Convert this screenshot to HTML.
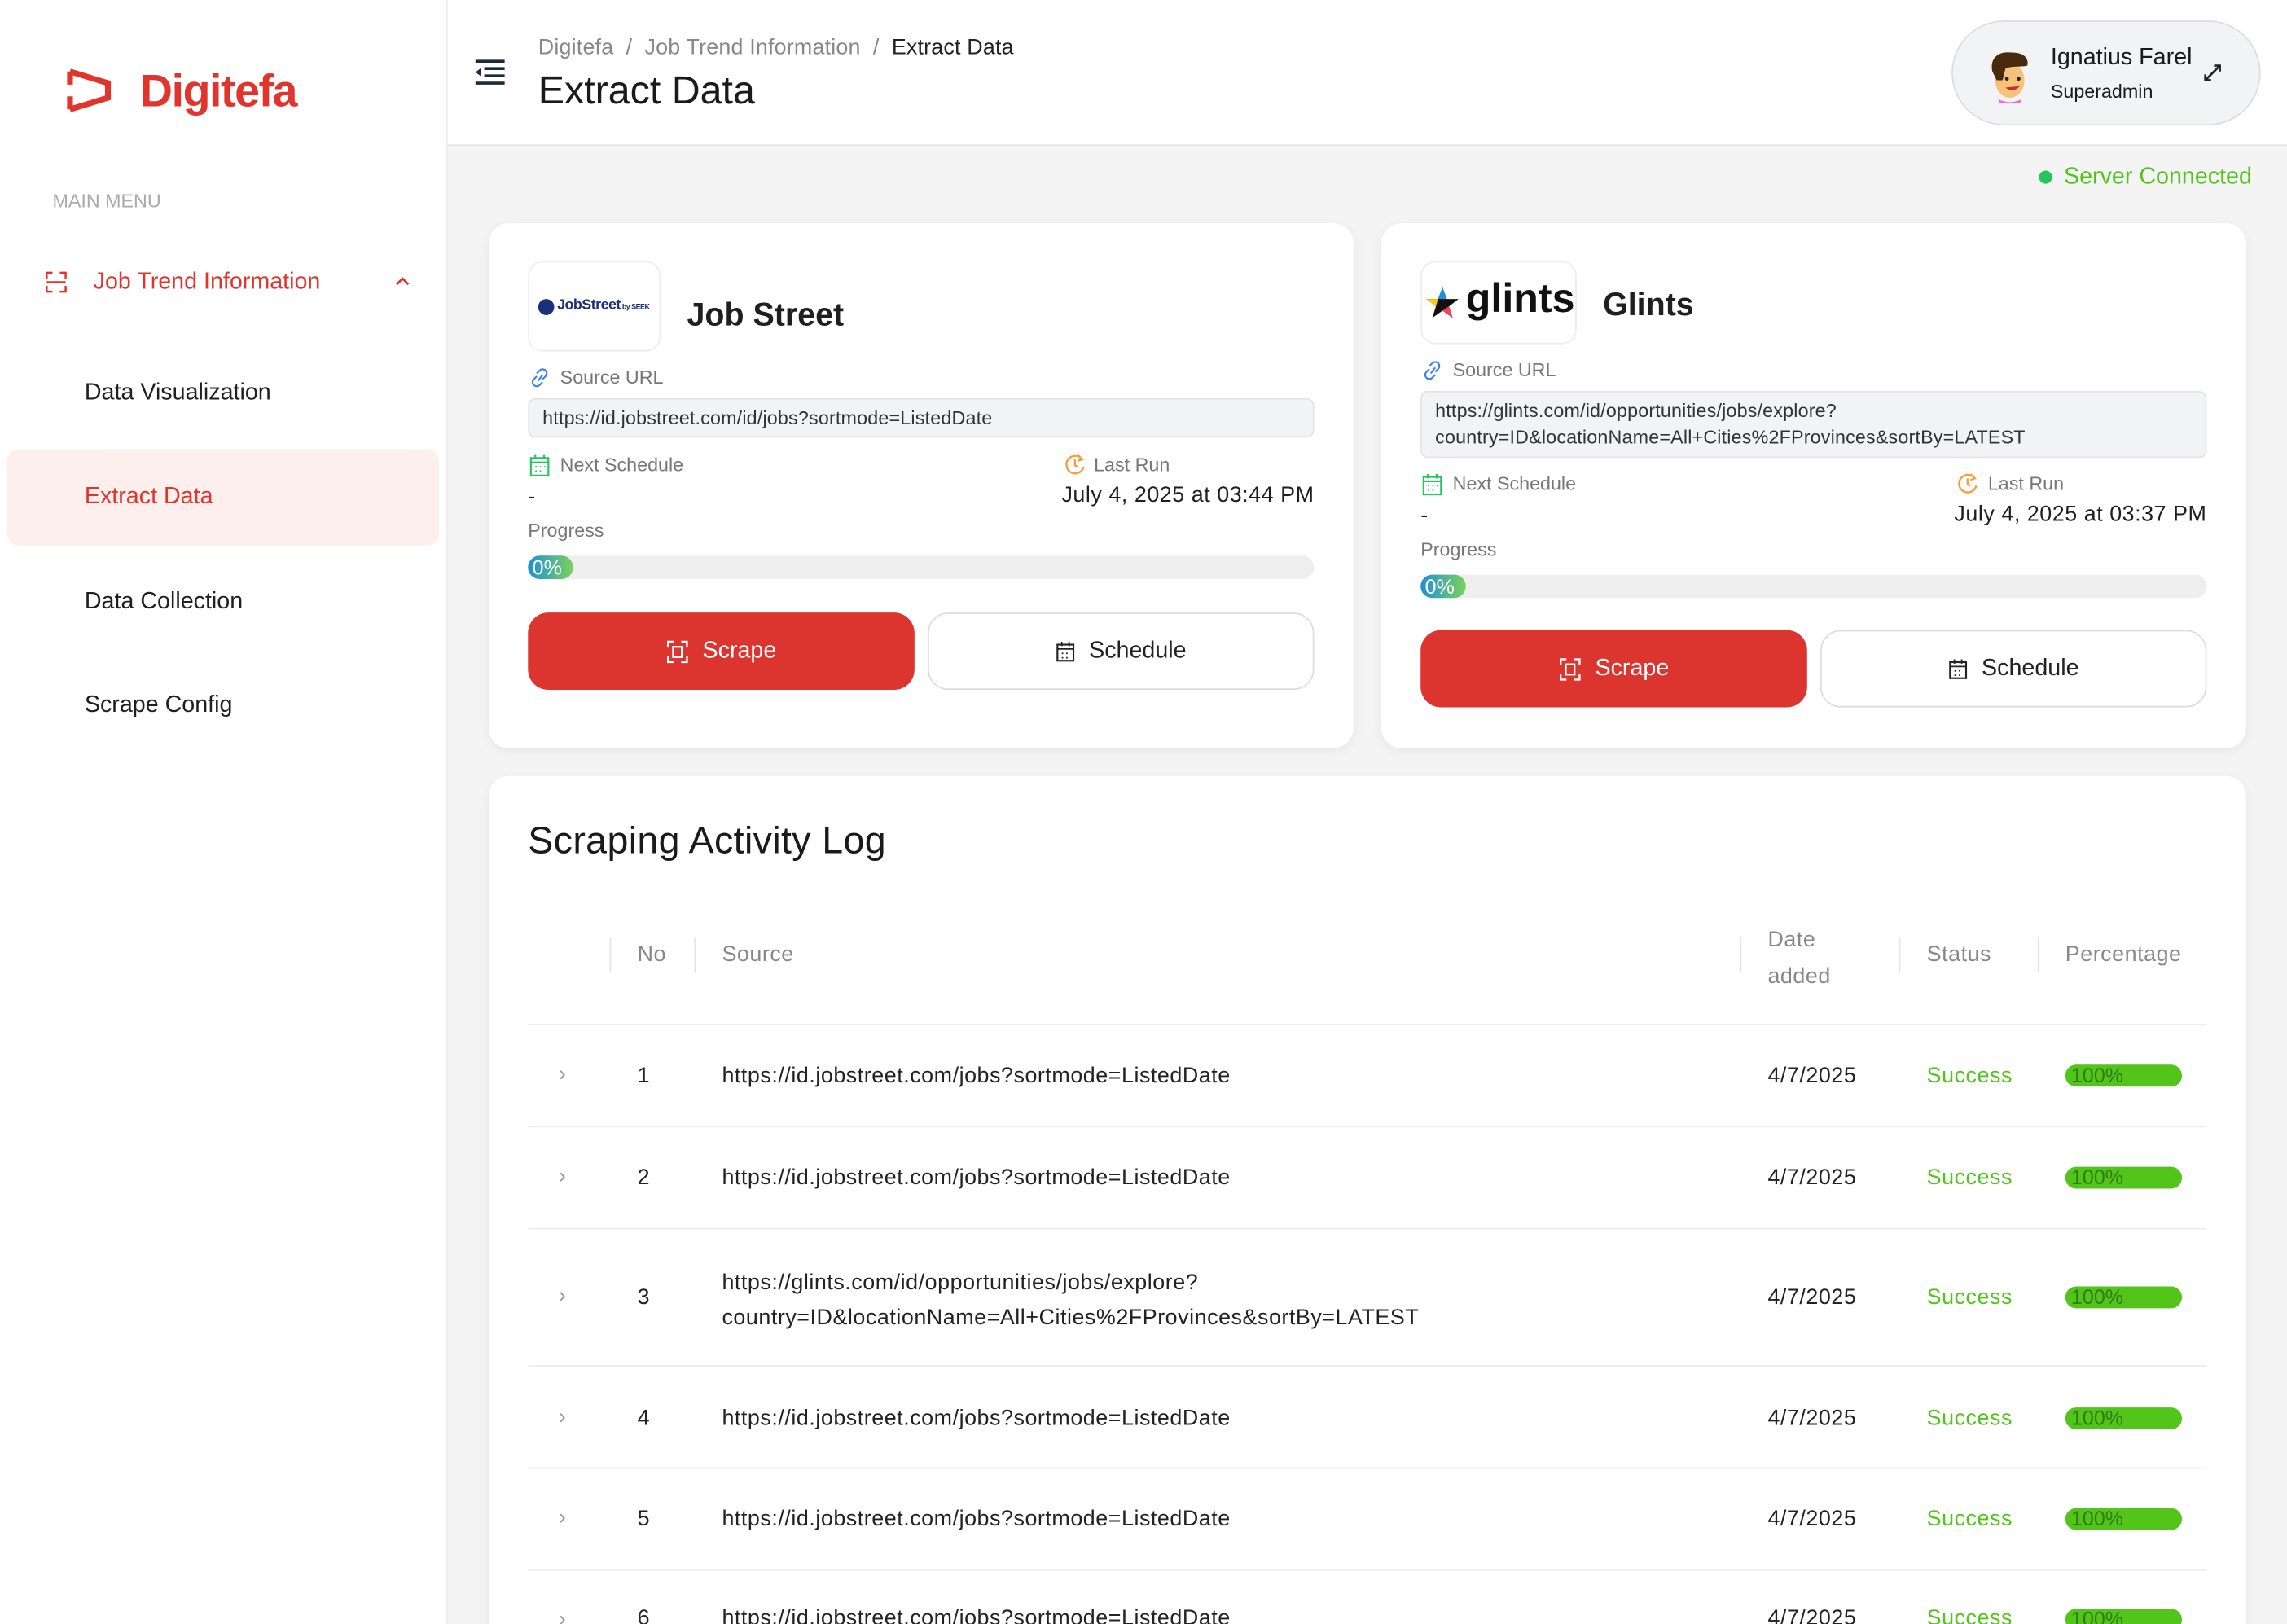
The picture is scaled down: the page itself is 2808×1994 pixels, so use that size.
<!DOCTYPE html>
<html><head><meta charset="utf-8">
<style>
*{box-sizing:border-box;margin:0;padding:0}
html,body{width:2808px;height:1994px;overflow:hidden;background:#f4f4f5}
body{font-family:"Liberation Sans",Arial,sans-serif;color:#1f1f1f}
#root{width:1568px;height:1114px;transform:scale(1.7908);transform-origin:0 0;position:relative;background:#f4f4f5}
.abs{position:absolute}
.side{left:0;top:0;width:307px;height:1114px;background:#fff;border-right:1px solid #ececec}
.t{position:absolute;white-space:nowrap}
.hdr{left:307px;top:0;width:1261px;height:100px;background:#fff;border-bottom:1px solid #e6e6e6}
.card{position:absolute;background:#fff;border-radius:14px;box-shadow:0 2px 8px rgba(0,0,0,.06)}
.gray{color:#777}
.inp{position:absolute;background:#f2f3f5;border:1px solid #e4e4e4;border-radius:5px;font-size:13px;color:#333;padding:0 9px;letter-spacing:0.1px}
.bar{position:absolute;height:16px;border-radius:8px;background:#efefef}
.pct{position:absolute;left:0;top:0;height:16px;width:31px;border-radius:8px;background:linear-gradient(90deg,#1e90d6,#7bd35a);color:#fff;font-size:14px;line-height:16px;padding-left:3px}
.btnr{position:absolute;height:53px;border-radius:14px;background:#dc3530;color:#fff;font-size:16px;display:flex;align-items:center;justify-content:center;gap:10px}
.btnw{position:absolute;height:53px;border-radius:14px;background:#fff;border:1px solid #ddd;color:#222;font-size:16px;display:flex;align-items:center;justify-content:center;gap:10px}
.row{position:absolute;left:362px;width:1151px;border-top:1px solid #ececec}
.c{position:absolute;font-size:15px;color:#222;white-space:nowrap;letter-spacing:0.3px}
.g100{position:absolute;left:1416px;width:80px;height:15px;border-radius:8px;background:#52c41a;color:#2f7d10;font-size:14px;line-height:15px;padding-left:4px}
.sep{position:absolute;top:643px;width:1px;height:24px;background:#e5e5e5}
</style></head><body><div id="root">

<div class="abs side">
  <svg class="abs" style="left:45px;top:46px" width="32" height="32" viewBox="0 0 32 32"><path d="M3 3 L29 11 V21 L3 29 M3 3 V12 M3 20 V29" fill="none" stroke="#e0342c" stroke-width="4"/></svg>
  <div class="t" style="left:96px;top:45px;font-size:31px;font-weight:bold;color:#e0342c;letter-spacing:-0.8px">Digitefa</div>
  <div class="t" style="left:36px;top:130px;font-size:13px;color:#aaa">MAIN MENU</div>
  <svg class="abs" style="left:31px;top:186px" width="15" height="15" viewBox="0 0 15 15"><path d="M1 5V1H5M10 1H14V5M14 10V14H10M5 14H1V10M1 7.5H14" fill="none" stroke="#e0342c" stroke-width="1.4"/></svg>
  <div class="t" style="left:64px;top:185px;font-size:16px;color:#e0342c">Job Trend Information</div>
  <svg class="abs" style="left:270px;top:189px" width="12" height="8" viewBox="0 0 12 8"><path d="M2 6L6 2L10 6" fill="none" stroke="#e0342c" stroke-width="1.5"/></svg>
  <div class="t" style="left:58px;top:261px;font-size:16px">Data Visualization</div>
  <div class="abs" style="left:5px;top:308px;width:296px;height:66px;background:#fdf0ec;border-radius:8px"></div>
  <div class="t" style="left:58px;top:332px;font-size:16px;color:#e0342c">Extract Data</div>
  <div class="t" style="left:58px;top:404px;font-size:16px">Data Collection</div>
  <div class="t" style="left:58px;top:475px;font-size:16px">Scrape Config</div>
</div>

<div class="abs hdr">
  <svg class="abs" style="left:18px;top:40px" width="22" height="19" viewBox="0 0 22 19"><path d="M1 2H21M7 7H21M7 12H21M1 17H21" stroke="#1f2937" stroke-width="2"/><path d="M1 9.5L5 6.5V12.5Z" fill="#1f2937"/></svg>
  <div class="t" style="left:62px;top:24px;font-size:15px;color:#888;letter-spacing:0.1px">Digitefa &nbsp;/&nbsp; Job Trend Information &nbsp;/&nbsp; <span style="color:#222">Extract Data</span></div>
  <div class="t" style="left:62px;top:47px;font-size:27px;color:#1a1a1a">Extract Data</div>
  <div class="abs" style="left:1031px;top:14px;width:212px;height:72px;border-radius:36px;background:#f2f3f5;border:1px solid #ddd">
    <svg class="abs" style="left:22px;top:18px" width="34" height="38" viewBox="0 0 34 38"><ellipse cx="17" cy="22" rx="10" ry="12" fill="#f6c27a"/><path d="M5 16C3 6 10 2 18 3C28 3 30 8 29 12C25 13 18 12 14 14L12 22H8Z" fill="#4a2a0c"/><circle cx="15" cy="21" r="1.3" fill="#222"/><circle cx="23" cy="21" r="1.3" fill="#222"/><path d="M14 27Q19 31 24 26Z" fill="#b33"/><path d="M9 35Q17 39 25 35L24 38H10Z" fill="#f46bd0"/></svg>
    <div class="t" style="left:67px;top:16px;font-size:16px;color:#1a1a1a">Ignatius Farel</div>
    <div class="t" style="left:67px;top:40px;font-size:13px;color:#1a1a1a">Superadmin</div>
    <svg class="abs" style="left:171px;top:28px" width="14" height="14" viewBox="0 0 14 14"><path d="M2 12L12 2M8 2H12V6M2 8V12H6" fill="none" stroke="#222" stroke-width="1.5"/></svg>
  </div>
</div>

<div class="abs" style="left:1398px;top:117px;width:9px;height:9px;border-radius:50%;background:#22c55e"></div>
<div class="t" style="left:1415px;top:113px;font-size:16px;color:#52c41a">Server Connected</div>

<!-- card 1 -->
<div class="card" style="left:335px;top:153px;width:593px;height:360px"></div>
<div class="abs" style="left:362px;top:179px;width:91px;height:62px;border:1px solid #eee;border-radius:10px;background:#fff"></div>
<div class="abs" style="left:369px;top:205px;width:11px;height:11px;border-radius:50%;background:#1c2f7a"></div>
<div class="t" style="left:382px;top:204px;font-size:10px;font-weight:bold;color:#1c2f7a;letter-spacing:-0.3px">JobStreet<span style="font-size:5px"> by SEEK</span></div>
<div class="t" style="left:471px;top:203px;font-size:22px;font-weight:bold">Job Street</div>
<svg class="abs" style="left:362px;top:252px" width="16" height="14" viewBox="0 0 16 14"><path d="M7 9L10 5M6 6L4 8A2.5 2.5 0 0 0 8 12L10 10M10 8L12 6A2.5 2.5 0 0 0 8 2L6 4" fill="none" stroke="#3b82f6" stroke-width="1.2"/></svg>
<div class="t gray" style="left:384px;top:251px;font-size:13px">Source URL</div>
<div class="inp" style="left:362px;top:273px;width:539px;height:27px;line-height:26px">https://id.jobstreet.com/id/jobs?sortmode=ListedDate</div>
<svg class="abs" style="left:363px;top:311px" width="14" height="16" viewBox="0 0 14 16"><rect x="1" y="3" width="12" height="12" fill="none" stroke="#22c55e" stroke-width="1.2"/><path d="M1 6H13M4 1V4M10 1V4" stroke="#22c55e" stroke-width="1.2"/><path d="M4 9h1M7 9h1M10 9h1M4 12h1M7 12h1" stroke="#22c55e"/></svg>
<div class="t gray" style="left:384px;top:311px;font-size:13px">Next Schedule</div>
<div class="t" style="left:362px;top:332px;font-size:15px">-</div>
<svg class="abs" style="left:730px;top:311px" width="15" height="15" viewBox="0 0 15 15"><path d="M12 4A6 6 0 1 0 13 9M9 1L12 4L9 5M7 4V8L9 9" fill="none" stroke="#f59e3a" stroke-width="1.3"/></svg>
<div class="t gray" style="left:750px;top:311px;font-size:13px">Last Run</div>
<div class="t" style="right:667px;top:331px;font-size:15px;letter-spacing:0.3px">July 4, 2025 at 03:44 PM</div>
<div class="t gray" style="left:362px;top:356px;font-size:13px">Progress</div>
<div class="bar" style="left:362px;top:381px;width:539px"><div class="pct">0%</div></div>
<div class="btnr" style="left:362px;top:420px;width:265px"><svg width="15" height="16" viewBox="0 0 15 16"><path d="M1 5V1H5M10 1H14V5M14 11V15H10M5 15H1V11" fill="none" stroke="#fff" stroke-width="1.3"/><rect x="4.5" y="4.5" width="6" height="7" fill="none" stroke="#fff" stroke-width="1.3"/></svg>Scrape</div>
<div class="btnw" style="left:636px;top:420px;width:265px"><svg width="13" height="14" viewBox="0 0 13 14"><rect x="1" y="2" width="11" height="11" fill="none" stroke="#222" stroke-width="1.2"/><path d="M1 5H12M4 0V3M9 0V3M4 8h1M7 8h1M4 11h1M7 11h1" stroke="#222" stroke-width="1"/></svg>Schedule</div>

<!-- card 2 -->
<div class="card" style="left:947px;top:153px;width:593px;height:360px"></div>
<div class="abs" style="left:974px;top:179px;width:107px;height:57px;border:1px solid #eee;border-radius:10px;background:#fff"></div>
<svg class="abs" style="left:977px;top:196px" width="24" height="24" viewBox="0 0 24 24"><path d="M12 1L15 9L23 9L16.5 14L19 22L12 17L5 22L7.5 14L1 9L9 9Z" fill="#111"/><path d="M12 1L15 9L9 9Z" fill="#1e90d6"/><path d="M16.5 14L19 22L12 17Z" fill="#f43f5e"/><path d="M1 9L9 9L7.5 14Z" fill="#facc15"/></svg>
<div class="t" style="left:1005px;top:189px;font-size:28px;font-weight:bold;color:#111">glints</div>
<div class="t" style="left:1099px;top:196px;font-size:22px;font-weight:bold">Glints</div>
<svg class="abs" style="left:974px;top:247px" width="16" height="14" viewBox="0 0 16 14"><path d="M7 9L10 5M6 6L4 8A2.5 2.5 0 0 0 8 12L10 10M10 8L12 6A2.5 2.5 0 0 0 8 2L6 4" fill="none" stroke="#3b82f6" stroke-width="1.2"/></svg>
<div class="t gray" style="left:996px;top:246px;font-size:13px">Source URL</div>
<div class="inp" style="left:974px;top:268px;width:539px;height:46px;line-height:18px;padding-top:4px">https://glints.com/id/opportunities/jobs/explore?<br>country=ID&amp;locationName=All+Cities%2FProvinces&amp;sortBy=LATEST</div>
<svg class="abs" style="left:975px;top:324px" width="14" height="16" viewBox="0 0 14 16"><rect x="1" y="3" width="12" height="12" fill="none" stroke="#22c55e" stroke-width="1.2"/><path d="M1 6H13M4 1V4M10 1V4" stroke="#22c55e" stroke-width="1.2"/><path d="M4 9h1M7 9h1M10 9h1M4 12h1M7 12h1" stroke="#22c55e"/></svg>
<div class="t gray" style="left:996px;top:324px;font-size:13px">Next Schedule</div>
<div class="t" style="left:974px;top:345px;font-size:15px">-</div>
<svg class="abs" style="left:1342px;top:324px" width="15" height="15" viewBox="0 0 15 15"><path d="M12 4A6 6 0 1 0 13 9M9 1L12 4L9 5M7 4V8L9 9" fill="none" stroke="#f59e3a" stroke-width="1.3"/></svg>
<div class="t gray" style="left:1363px;top:324px;font-size:13px">Last Run</div>
<div class="t" style="right:55px;top:344px;font-size:15px;letter-spacing:0.3px">July 4, 2025 at 03:37 PM</div>
<div class="t gray" style="left:974px;top:369px;font-size:13px">Progress</div>
<div class="bar" style="left:974px;top:394px;width:539px"><div class="pct">0%</div></div>
<div class="btnr" style="left:974px;top:432px;width:265px"><svg width="15" height="16" viewBox="0 0 15 16"><path d="M1 5V1H5M10 1H14V5M14 11V15H10M5 15H1V11" fill="none" stroke="#fff" stroke-width="1.3"/><rect x="4.5" y="4.5" width="6" height="7" fill="none" stroke="#fff" stroke-width="1.3"/></svg>Scrape</div>
<div class="btnw" style="left:1248px;top:432px;width:265px"><svg width="13" height="14" viewBox="0 0 13 14"><rect x="1" y="2" width="11" height="11" fill="none" stroke="#222" stroke-width="1.2"/><path d="M1 5H12M4 0V3M9 0V3M4 8h1M7 8h1M4 11h1M7 11h1" stroke="#222" stroke-width="1"/></svg>Schedule</div>

<!-- log -->
<div class="card" style="left:335px;top:532px;width:1205px;height:620px"></div>
<div class="t" style="left:362px;top:561px;font-size:26px;color:#1a1a1a;letter-spacing:0.2px">Scraping Activity Log</div>
<div class="sep" style="left:418px"></div><div class="sep" style="left:476px"></div><div class="sep" style="left:1193px"></div><div class="sep" style="left:1302px"></div><div class="sep" style="left:1397px"></div>
<div class="c gray" style="left:437px;top:646px;color:#888">No</div>
<div class="c" style="left:495px;top:646px;color:#888">Source</div>
<div class="c" style="left:1212px;top:632px;color:#888;line-height:25px">Date<br>added</div>
<div class="c" style="left:1321px;top:646px;color:#888">Status</div>
<div class="c" style="left:1416px;top:646px;color:#888">Percentage</div>

<div class="row" style="top:702px"></div><div class="row" style="top:772px"></div><div class="row" style="top:842px"></div><div class="row" style="top:936px"></div><div class="row" style="top:1006px"></div><div class="row" style="top:1076px"></div>

<div class="c" style="left:383px;top:728px;color:#999">›</div><div class="c" style="left:437px;top:729px">1</div><div class="c" style="left:495px;top:729px">https://id.jobstreet.com/jobs?sortmode=ListedDate</div><div class="c" style="left:1212px;top:729px">4/7/2025</div><div class="c" style="left:1321px;top:729px;color:#52c41a">Success</div><div class="g100" style="top:730px">100%</div>
<div class="c" style="left:383px;top:798px;color:#999">›</div><div class="c" style="left:437px;top:799px">2</div><div class="c" style="left:495px;top:799px">https://id.jobstreet.com/jobs?sortmode=ListedDate</div><div class="c" style="left:1212px;top:799px">4/7/2025</div><div class="c" style="left:1321px;top:799px;color:#52c41a">Success</div><div class="g100" style="top:800px">100%</div>
<div class="c" style="left:383px;top:880px;color:#999">›</div><div class="c" style="left:437px;top:881px">3</div><div class="c" style="left:495px;top:868px;line-height:24px">https://glints.com/id/opportunities/jobs/explore?<br>country=ID&amp;locationName=All+Cities%2FProvinces&amp;sortBy=LATEST</div><div class="c" style="left:1212px;top:881px">4/7/2025</div><div class="c" style="left:1321px;top:881px;color:#52c41a">Success</div><div class="g100" style="top:882px">100%</div>
<div class="c" style="left:383px;top:963px;color:#999">›</div><div class="c" style="left:437px;top:964px">4</div><div class="c" style="left:495px;top:964px">https://id.jobstreet.com/jobs?sortmode=ListedDate</div><div class="c" style="left:1212px;top:964px">4/7/2025</div><div class="c" style="left:1321px;top:964px;color:#52c41a">Success</div><div class="g100" style="top:965px">100%</div>
<div class="c" style="left:383px;top:1032px;color:#999">›</div><div class="c" style="left:437px;top:1033px">5</div><div class="c" style="left:495px;top:1033px">https://id.jobstreet.com/jobs?sortmode=ListedDate</div><div class="c" style="left:1212px;top:1033px">4/7/2025</div><div class="c" style="left:1321px;top:1033px;color:#52c41a">Success</div><div class="g100" style="top:1034px">100%</div>
<div class="c" style="left:383px;top:1102px;color:#999">›</div><div class="c" style="left:437px;top:1101px">6</div><div class="c" style="left:495px;top:1101px">https://id.jobstreet.com/jobs?sortmode=ListedDate</div><div class="c" style="left:1212px;top:1101px">4/7/2025</div><div class="c" style="left:1321px;top:1101px;color:#52c41a">Success</div><div class="g100" style="top:1103px">100%</div>

</div></body></html>
